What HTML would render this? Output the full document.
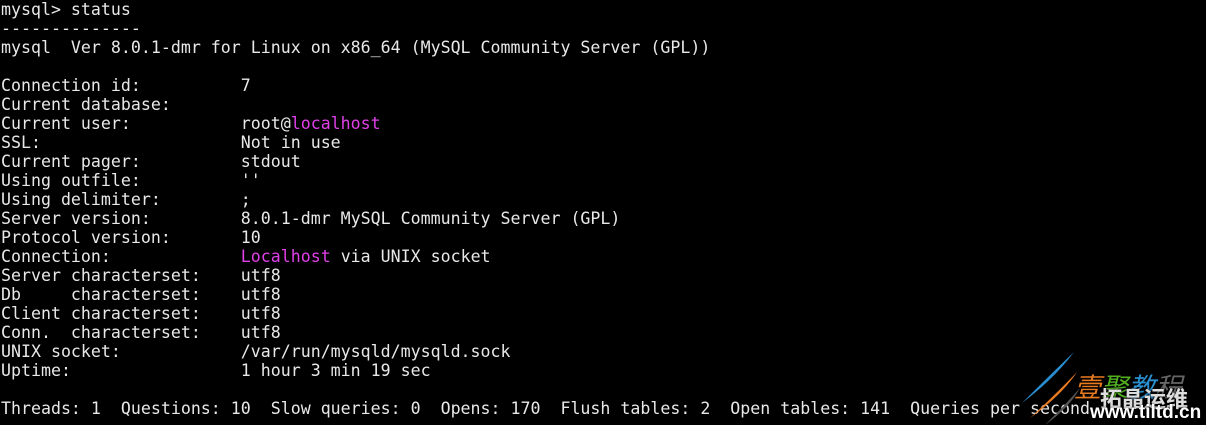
<!DOCTYPE html>
<html><head><meta charset="utf-8"><style>
html,body{margin:0;padding:0;background:#000;width:1206px;height:425px;overflow:hidden;position:relative}
pre{margin:0;position:absolute;left:1px;top:0;font-family:"DejaVu Sans Mono","Liberation Mono",monospace;font-size:16.6px;line-height:19px;color:#e8e8e8;white-space:pre}
.m{color:#e040e8}
.wm{position:absolute;font-family:"Noto Sans CJK SC",sans-serif;font-weight:bold;white-space:nowrap}
</style></head><body>
<pre>mysql&gt; status
--------------
mysql  Ver 8.0.1-dmr for Linux on x86_64 (MySQL Community Server (GPL))

Connection id:          7
Current database:
Current user:           root@<span class="m">localhost</span>
SSL:                    Not in use
Current pager:          stdout
Using outfile:          ''
Using delimiter:        ;
Server version:         8.0.1-dmr MySQL Community Server (GPL)
Protocol version:       10
Connection:             <span class="m">Localhost</span> via UNIX socket
Server characterset:    utf8
Db     characterset:    utf8
Client characterset:    utf8
Conn.  characterset:    utf8
UNIX socket:            /var/run/mysqld/mysqld.sock
Uptime:                 1 hour 3 min 19 sec

Threads: 1  Questions: 10  Slow queries: 0  Opens: 170  Flush tables: 2  Open tables: 141  Queries per second</pre>
<svg style="position:absolute;left:1020px;top:350px" width="80" height="75">
<path d="M54 2 Q30 25 2 53 Q35 28 54 2Z" fill="#2a8fd0"/>
<path d="M57 22 Q35 45 10 68 Q42 45 57 22Z" fill="#e87a20"/>
<path d="M60 38 Q45 55 25 75 Q50 57 60 38Z" fill="#555"/>
</svg>
<div class="wm" style="left:1074px;top:372px;font-size:27px;line-height:28px;font-style:italic;font-weight:normal"><span style="color:#e87a20">壹</span><span style="color:#50b020">聚</span><span style="color:#2a8fd0">教</span><span style="color:#666">程</span></div>
<div class="wm" style="left:1100px;top:386px;font-size:22px;line-height:24px;color:#ddd;text-shadow:0 0 2px #000">拓晶运维</div>
<div class="wm" style="left:1090px;top:403px;font-family:'Liberation Sans',sans-serif;font-size:19px;line-height:20px;color:#fff;text-shadow:0 0 2px #000">www.tiltd.cn</div>
</body></html>
